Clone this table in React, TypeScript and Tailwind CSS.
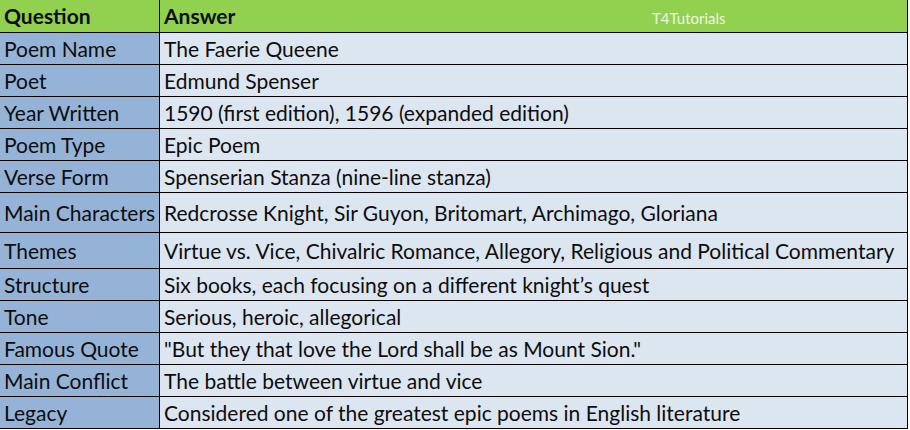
const rows: { q: string; a: string; h: string }[] = [
  { q: "Poem Name", a: "The Faerie Queene", h: "h-[32px]" },
  { q: "Poet", a: "Edmund Spenser", h: "h-[32px]" },
  { q: "Year Written", a: "1590 (first edition), 1596 (expanded edition)", h: "h-[32px]" },
  { q: "Poem Type", a: "Epic Poem", h: "h-[32px]" },
  { q: "Verse Form", a: "Spenserian Stanza (nine-line stanza)", h: "h-[32px]" },
  { q: "Main Characters", a: "Redcrosse Knight, Sir Guyon, Britomart, Archimago, Gloriana", h: "h-[40px]" },
  { q: "Themes", a: "Virtue vs. Vice, Chivalric Romance, Allegory, Religious and Political Commentary", h: "h-[36px]" },
  { q: "Structure", a: "Six books, each focusing on a different knight’s quest", h: "h-[32px]" },
  { q: "Tone", a: "Serious, heroic, allegorical", h: "h-[32px]" },
  { q: "Famous Quote", a: "\"But they that love the Lord shall be as Mount Sion.\"", h: "h-[32px]" },
  { q: "Main Conflict", a: "The battle between virtue and vice", h: "h-[32px]" },
  { q: "Legacy", a: "Considered one of the greatest epic poems in English literature", h: "h-[32px]" },
];

export default function App() {
  return (
    <div className="w-[910px] h-[430px] bg-white font-['Lato',sans-serif] text-[21px] text-[#0d0d0d] overflow-hidden">
      <div className="w-[908px] border-r border-black">
        <div className="flex h-[33px] bg-[#92d050] border-b border-black font-bold">
          <div className="w-[160px] border-r border-black flex items-center pl-[4px]">Question</div>
          <div className="flex-1 flex items-center pl-[4px] relative">
            Answer
            <span className="absolute left-[492px] top-[7px] text-[15px] font-normal text-[#eef6e4]">T4Tutorials</span>
          </div>
        </div>
        {rows.map((r) => (
          <div key={r.q} className={`flex ${r.h} border-b border-black`}>
            <div className="w-[160px] bg-[#95b3d7] border-r border-black flex items-center pl-[4px] whitespace-nowrap">{r.q}</div>
            <div className="flex-1 bg-[#dce6f1] flex items-center pl-[4px] whitespace-nowrap">{r.a}</div>
          </div>
        ))}
      </div>
    </div>
  );
}
